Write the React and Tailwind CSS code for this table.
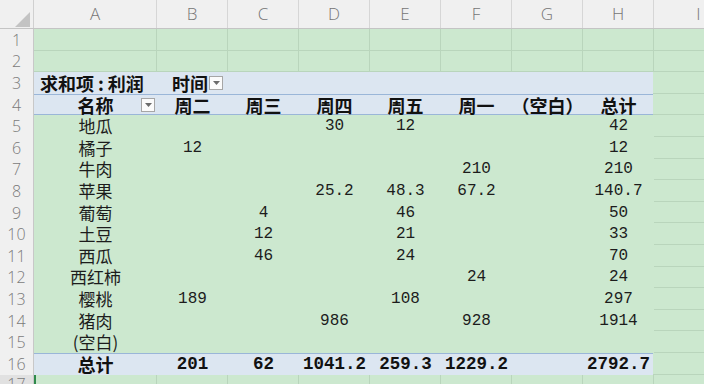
import React from 'react';

// column widths for A..I
const COLS = [
  { key: 'A', w: 'w-[123px]' },
  { key: 'B', w: 'w-[71px]' },
  { key: 'C', w: 'w-[71px]' },
  { key: 'D', w: 'w-[71px]' },
  { key: 'E', w: 'w-[71px]' },
  { key: 'F', w: 'w-[71px]' },
  { key: 'G', w: 'w-[71px]' },
  { key: 'H', w: 'w-[71px]' },
  { key: 'I', w: 'w-[90px]' },
];

const HEADS = ['周二', '周三', '周四', '周五', '周一', '（空白）', '总计'];

const DATA = [
  ['地瓜', '', '', '30', '12', '', '', '42'],
  ['橘子', '12', '', '', '', '', '', '12'],
  ['牛肉', '', '', '', '', '210', '', '210'],
  ['苹果', '', '', '25.2', '48.3', '67.2', '', '140.7'],
  ['葡萄', '', '4', '', '46', '', '', '50'],
  ['土豆', '', '12', '', '21', '', '', '33'],
  ['西瓜', '', '46', '', '24', '', '', '70'],
  ['西红柿', '', '', '', '', '24', '', '24'],
  ['樱桃', '189', '', '', '108', '', '', '297'],
  ['猪肉', '', '', '986', '', '928', '', '1914'],
  ['(空白)', '', '', '', '', '', '', ''],
];

const TOTALS = ['总计', '201', '62', '1041.2', '259.3', '1229.2', '', '2792.7'];

const cjk = "font-['Noto_Sans_CJK_SC',sans-serif]";
const mono = "font-['Liberation_Mono','Noto_Sans_CJK_SC',monospace]";
const grid = 'border-[#b9d5bc]';

const Dropdown = () => (
  <span className="inline-flex w-[14px] h-[14px] items-center justify-center border border-[#a6a6a6] bg-[#fbfbfb]">
    <svg width="7" height="4" viewBox="0 0 7 4">
      <polygon points="0,0 7,0 3.5,4" fill="#6b6b6b" />
    </svg>
  </span>
);

const RowNum = ({ n, active }) => (
  <div
    className={`w-[34px] shrink-0 h-full flex items-center justify-center border-r border-[#c8c8c8] text-[16px] leading-[18px] font-light text-[#7a7a7a] font-['Open_Sans',sans-serif] ${
      active ? 'bg-[#e1e1e1] items-start' : 'bg-[#f0f0f0]'
    }`}
  >
    {n}
  </div>
);

// plain sheet row with gridlines everywhere
const PlainRow = ({ n, active }) => (
  <div className="flex h-[21.6px]">
    <RowNum n={n} active={active} />
    {COLS.map((c, i) => (
      <div
        key={c.key}
        className={`${c.w} shrink-0 h-full border-r border-b ${grid} ${
          active && i === 0 ? 'border-l-2 border-l-[#2f8a4c]' : ''
        }`}
      />
    ))}
  </div>
);

const ICell = () => <div className={`w-[90px] shrink-0 h-full border-b border-r ${grid}`} />;

const DataRow = ({ n, row }) => (
  <div className="flex h-[21.6px]">
    <RowNum n={n} />
    {row.map((v, i) => (
      <div
        key={i}
        className={`${COLS[i].w} shrink-0 h-full flex items-center justify-center text-[#1c1c1c] leading-[18px] ${
          i === 0 ? `${cjk} text-[17px]` : `${mono} text-[16px]`
        }`}
      >
        {v}
      </div>
    ))}
    <ICell />
  </div>
);

export default function App() {
  return (
    <div className="w-[704px] h-[384px] overflow-hidden bg-[#cce8cf] select-none">
      {/* column letters */}
      <div className="flex h-[29px] bg-[#f0f0f0] border-b border-[#c4c4c4]">
        <div className="w-[34px] shrink-0 h-full relative border-r border-[#d0d0d0]">
          <svg className="absolute left-[15px] top-[12px]" width="15" height="15" viewBox="0 0 15 15">
            <polygon points="15,0 15,15 0,15" fill="#c3c3c3" />
          </svg>
        </div>
        {COLS.map((c) => (
          <div
            key={c.key}
            className={`${c.w} shrink-0 h-full flex items-center justify-center text-[17px] font-light text-[#757575] font-['Open_Sans',sans-serif] border-r border-[#d6d6d6]`}
          >
            {c.key}
          </div>
        ))}
      </div>

      <PlainRow n={1} />
      <PlainRow n={2} />

      {/* row 3: pivot filter line */}
      <div className="flex h-[21.6px]">
        <RowNum n={3} />
        <div className="flex w-[619px] shrink-0 h-full bg-[#dce6f1] text-[18px] font-bold text-[#111] leading-[18px]">
          <div className={`w-[123px] shrink-0 h-full flex items-center pl-[6px] whitespace-nowrap ${cjk}`}>
            求和项<span className="mx-[4px]">:</span>利润
          </div>
          <div className={`w-[71px] shrink-0 h-full flex items-center justify-end gap-[1px] pr-[5px] ${cjk}`}>
            时间
            <Dropdown />
          </div>
        </div>
        <ICell />
      </div>

      {/* row 4: column labels */}
      <div className="flex h-[21.6px]">
        <RowNum n={4} />
        <div className="flex w-[619px] shrink-0 h-full bg-[#dce6f1] border-y border-[#9ab6d8] text-[18px] font-bold text-[#111] leading-[18px]">
          <div className={`w-[123px] shrink-0 h-full relative flex items-center justify-center ${cjk}`}>
            名称
            <span className="absolute right-[2px] top-[3px] flex">
              <Dropdown />
            </span>
          </div>
          {HEADS.map((h) => (
            <div key={h} className={`w-[71px] shrink-0 h-full flex items-center justify-center whitespace-nowrap ${cjk}`}>
              {h}
            </div>
          ))}
        </div>
        <ICell />
      </div>

      {DATA.map((row, i) => (
        <DataRow key={i} n={i + 5} row={row} />
      ))}

      {/* row 16: grand totals */}
      <div className="flex h-[21.6px]">
        <RowNum n={16} />
        <div className="flex w-[619px] shrink-0 h-full bg-[#dce6f1] border-t border-[#9ab6d8] font-bold text-[#111] leading-[18px]">
          {TOTALS.map((v, i) => (
            <div
              key={i}
              className={`${COLS[i].w} shrink-0 h-full flex items-center justify-center whitespace-nowrap ${
                i === 0 ? `${cjk} text-[18px]` : `${mono} text-[17.5px]`
              }`}
            >
              {v}
            </div>
          ))}
        </div>
        <ICell />
      </div>

      <PlainRow n={17} active />
    </div>
  );
}
